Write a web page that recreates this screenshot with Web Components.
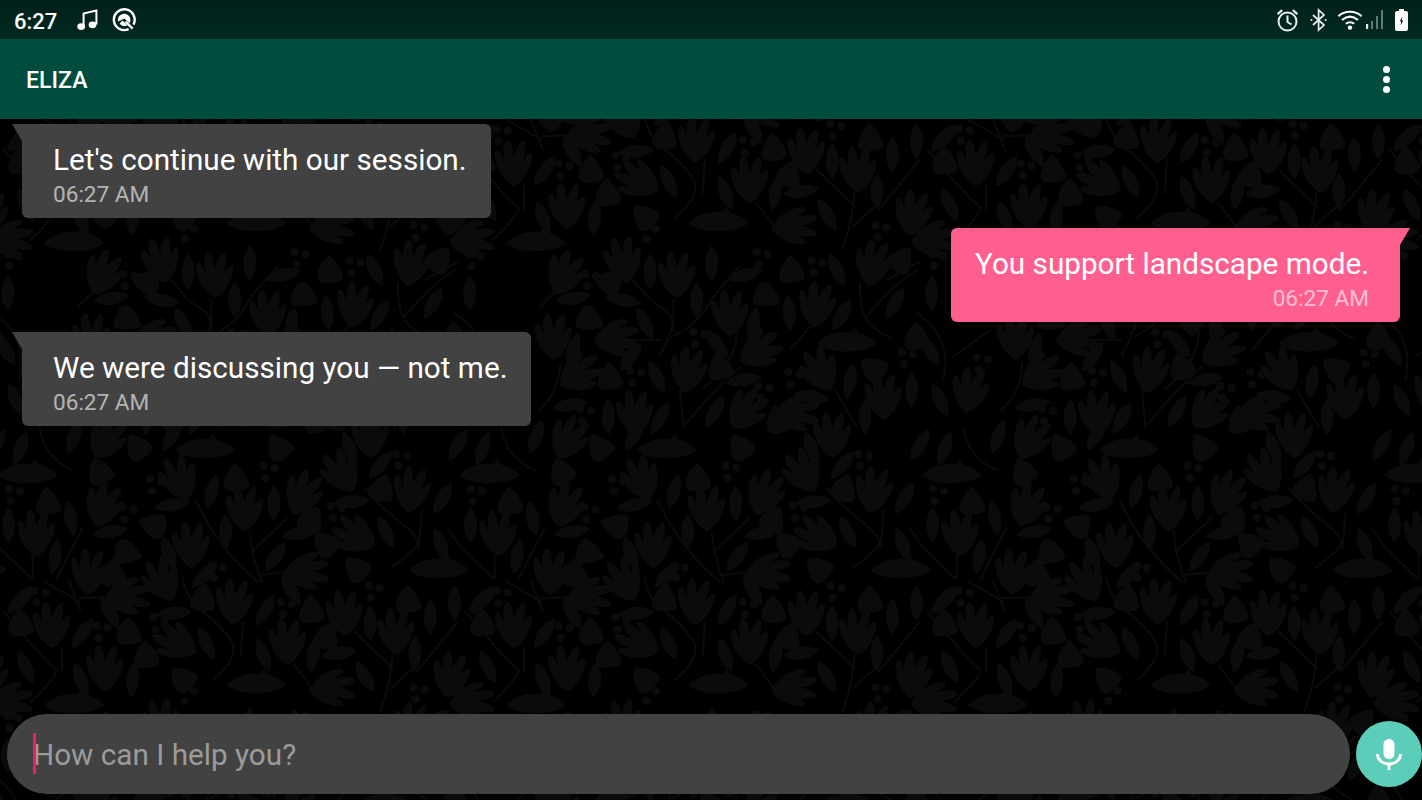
<!DOCTYPE html>
<html>
<head>
<meta charset="utf-8">
<title>ELIZA</title>
<style>
html,body{margin:0;height:100%;background:#000;overflow:hidden;}
body{font-family:Roboto,"Liberation Sans",sans-serif;}
</style>
</head>
<body>
<eliza-app>
    <status-bar slot="status"></status-bar>
    <app-bar slot="bar">ELIZA</app-bar>
    <chat-bubble time="06:27 AM">Let's continue with our session.</chat-bubble>
    <chat-bubble side="me" time="06:27 AM">You support landscape mode.</chat-bubble>
    <chat-bubble time="06:27 AM">We were discussing you — not me.</chat-bubble>
    <chat-composer slot="composer" placeholder="How can I help you?"></chat-composer>
</eliza-app>

<script>
// motifs are listed as read from two 3x crops of the wallpaper, hence the scale in each band
const bandA=[
    ["t",520,160,-20],["t",880,205,25],["t",710,250,0],["t",555,360,0],["t",990,140,-30],["t",1195,195,10],
    ["t",300,240,20],["t",105,325,0],["t",260,440,5],["t",470,465,-25],["t",680,530,5],["t",890,440,85],
    ["t",370,515,85],["t",1000,565,0],["t",1150,620,0],["t",150,600,0],["t",835,650,0],["t",305,730,0],
    ["t",1030,330,-60],["t",510,650,-60],["t",965,790,85],["t",30,830,85],["t",1310,750,10],
    ["t",310,40,30],["t",1075,30,0],
    ["l",60,70,20],["l",215,35,20],["l",1015,70,-20],["l",1330,60,30],["l",500,30,30],
    ["l",615,200,15],["l",795,235,0],["l",655,320,0],["l",490,385,-20],["l",800,395,35],["l",595,450,45],
    ["l",500,240,80],["l",870,325,80],["l",205,280,-10],["l",25,300,0],["l",160,395,10],["l",320,320,80],
    ["l",60,525,50],["l",320,565,-30],["l",240,625,35],["l",770,555,30],["l",505,565,85],["l",845,495,-30],
    ["l",1020,230,85],["l",1120,320,-25],["l",1105,120,40],["l",1285,220,30],["l",1280,360,-20],["l",1075,595,0],
    ["l",1250,575,0],["l",1205,685,0],["l",1060,755,-30],["l",985,685,80],["l",910,690,10],["l",600,655,-25],
    ["l",765,690,-20],["l",385,765,5],["l",235,765,-20],["l",75,725,-25],["l",1320,535,0],["l",1400,525,40],
    ["b",595,75,0],["b",80,150,0],["b",745,780,0],["b",215,840,0],["b",1275,435,0],
    ["c",685,160,0],["c",140,230,0],["c",445,300,-70],["c",370,385,110],["c",905,285,30],["c",945,355,-40],
    ["c",290,140,-20],["c",810,65,-30],["c",400,65,-30],["c",1110,190,20],["c",330,445,0],["c",375,620,0],
    ["c",590,520,10],["c",60,595,0],["c",905,555,0],["c",1185,525,0],["c",425,690,0],["c",950,635,20],
    ["c",530,760,-40],["c",1035,430,-40],
    ["d",450,180,0],["d",780,140,0],["d",40,210,0],["d",370,265,0],["d",630,440,0],["d",115,515,0],
    ["d",975,260,0],["d",1165,105,0],["d",1085,500,0],["d",830,550,0],["d",295,620,0],["d",460,595,0],
    ["d",545,810,0],["d",1215,805,0]
];
const stemsA=[
    [[570,230],[640,380],[750,470]],[[725,320],[730,390],[760,470]],[[835,280],[730,380]],
    [[1060,190],[1100,240],[1210,330],[1215,370],[1135,430]],[[1225,260],[1215,370]],
    [[530,460],[540,520],[640,600],[700,690],[620,765]],[[705,590],[700,690]],[[240,310],[165,460]],
    [[0,370],[90,460]],[[95,390],[95,460]],[[10,560],[140,720],[180,740],[90,830]],[[180,670],[180,740]],
    [[1300,310],[1340,370]],[[1330,590],[1210,740]],[[1140,690],[1135,770],[1105,860]],[[1030,620],[1140,730]],
    [[1210,720],[1135,790]],[[115,10],[130,100],[210,135]],[[130,470],[230,530]],[[200,470],[235,560]],
    [[230,520],[330,515]],[[855,720],[910,795]],[[750,450],[850,440]]
];
const bandB=[
    ["t",75,70,25],["t",410,75,0],["t",250,30,-10],["t",570,190,0],["t",830,165,10],["t",1000,40,10],
    ["t",445,360,10],["t",660,300,60],["t",120,370,60],["t",40,260,0],["t",840,360,-25],["t",1030,440,0],
    ["t",1290,420,10],["t",230,265,85],["t",620,480,40],["t",285,490,0],["t",770,490,85],
    ["l",330,65,0],["l",100,145,80],["l",250,150,100],["l",470,150,0],["l",315,220,-25],["l",640,225,10],
    ["l",100,300,15],["l",272,320,35],["l",530,280,-40],["l",350,380,-25],["l",748,190,-5],["l",905,195,30],
    ["l",615,75,75],["l",515,40,0],["l",890,60,-25],["l",1065,160,30],["l",610,390,80],["l",930,395,10],
    ["l",815,440,100],["l",1115,420,0],["l",1200,450,-25],["l",90,465,80],["l",525,485,30],["l",975,500,0],
    ["l",205,500,0],["l",1175,130,0],["l",1170,300,-30],["l",360,505,30],
    ["c",205,95,-70],["c",150,210,120],["c",680,140,120],["c",755,60,0],["c",540,350,-10],["c",210,380,0],
    ["c",1000,355,-50],["c",1130,260,0],["c",715,510,-10],["c",1085,30,40],
    ["d",150,90,0],["d",285,380,0],["d",475,265,0],["d",665,25,0],["d",830,50,0],["d",760,385,0],
    ["d",1100,325,0],["d",670,425,0],["d",135,495,0],["d",1190,30,0],["d",1325,340,0],
    ["b",920,280,0]
];
const stemsB=[
    [[280,90],[330,155],[395,190],[400,240],[360,315]],[[400,150],[400,240]],[[395,260],[470,225],[530,120],[600,50]],
    [[590,240],[595,330],[490,415]],[[200,270],[360,270]],[[960,100],[960,180],[1000,240],[1055,265]],
    [[1040,90],[1140,35]],[[980,200],[1050,110],[1130,60]],[[810,230],[750,300]],[[885,420],[950,530]],
    [[420,420],[430,530]],[[440,520],[510,430],[600,350]],[[0,170],[50,120]],[[60,340],[60,420],[0,480]],
    [[1130,190],[1240,260],[1210,390]],[[1240,320],[1350,240]]
];

const mapA=(x,y)=>[x/2.904,y/3+425];
const mapB=(x,y)=>[x/3+78,y/3+250];

function stemPath(points,map){
    const p=points.map(([x,y])=>map(x,y).map(n=>+n.toFixed(1)));
    let d=`M${p[0]}`;
    for(let i=1;i<p.length-1;i++){
        const mid=[(p[i][0]+p[i+1][0])/2,(p[i][1]+p[i+1][1])/2];
        d+=`Q${p[i]} ${i==p.length-2?p[i+1]:mid}`;
    }
    if(p.length==2) d+=`L${p[1]}`;
    return `<path d="${d}"/>`;
}
function motifUse(m,map){
    const [x,y]=map(m[1],m[2]);
    return `<use href="#${m[0]}" transform="translate(${x.toFixed(1)} ${y.toFixed(1)}) rotate(${m[3]})"/>`;
}

class ChatWallpaper extends HTMLElement{
    constructor(){
        super();
        this.attachShadow({mode:"open"});
        const art=bandA.map(m=>motifUse(m,mapA)).join("")+bandB.map(m=>motifUse(m,mapB)).join("");
        const stems=stemsA.map(s=>stemPath(s,mapA)).join("")+stemsB.map(s=>stemPath(s,mapB)).join("");
        let copies="";
        for(const dx of [-462,0,462]){
            for(const dy of [-462,0,462]){
                copies+=`<use href="#art" x="${dx}" y="${dy}"/>`;
            }
        }
        this.shadowRoot.innerHTML=`
            <style>
            :host{position:absolute;inset:0;display:block;background:#000;}
            svg{display:block;width:100%;height:100%;}
            </style>
            <svg aria-hidden="true">
                <defs>
                    <path id="t" d="M0 23C-10 17-18 6-19-8C-19-13-15-14-13-10L-9-1C-11-10-11-20-7-23C-3-24-1-16 0-6C2-14 6-22 10-22C13-21 12-12 9-2C12-7 16-11 18-9C20-6 16 8 10 15C6 20 3 22 0 23Z"/>
                    <path id="l" d="M0-18C8-9 9 7 0 18C-9 7-8-9 0-18Z"/>
                    <path id="b" d="M-30 0C-20-10-6-12 4-11L8-16L12-10C20-9 26-4 30 0C20 10-18 12-30 0Z"/>
                    <path id="c" d="M-1-15C6-10 12 0 13 6C14 11 6 12-1 13C-9 14-14 10-12 3C-10-5-6-11-1-15Z"/>
                    <g id="d"><circle cx="-5" cy="-6" r="4"/><circle cx="6" cy="-4" r="4"/><circle cx="-3" cy="6" r="4"/></g>
                    <g id="art" fill="#0b0b0b">
                        ${art}
                        <g fill="none" stroke="#0b0b0b" stroke-width="2" stroke-linecap="round">${stems}</g>
                    </g>
                    <pattern id="floral" width="462" height="462" patternUnits="userSpaceOnUse" patternTransform="translate(0 -119)">${copies}</pattern>
                </defs>
                <rect width="100%" height="100%" fill="url(#floral)"/>
            </svg>
        `;
    }
}
customElements.define("chat-wallpaper",ChatWallpaper);

class StatusBar extends HTMLElement{
    constructor(){
        super();
        this.attachShadow({mode:"open"});
        this.shadowRoot.innerHTML=`
            <style>
            :host{display:flex;align-items:center;height:39px;background:linear-gradient(#00201a,#01291f);color:#fff;padding:0 13px 0 14px;box-sizing:border-box;}
            .clock{font-size:22px;font-weight:500;width:62px;padding-top:3px;}
            .left{display:flex;align-items:center;gap:14px;flex:1;}
            .right{display:flex;align-items:center;}
            svg{display:block;}
            </style>
            <span class="clock">6:27</span>
            <div class="left">
                <svg width="22" height="22" viewBox="0 0 22 22" fill="#fff"><ellipse cx="5.2" cy="17.6" rx="3.9" ry="3.4"/><ellipse cx="16.5" cy="15.8" rx="3.9" ry="3.4"/><path d="M7.6 17.5V4.6L20.4 1.6V15.6" fill="none" stroke="#fff" stroke-width="2"/></svg>
                <svg width="24" height="24" viewBox="0 0 24 24"><path d="M16.6 21.1A10.4 10.4 0 1 1 21.4 16.6" fill="none" stroke="#fff" stroke-width="2.4"/><path d="M6 13.5A6.3 6.3 0 1 1 17.6 15.2L12.4 10.4Z" fill="#fff"/><path d="M7.6 15.6L10.7 12.4L15.4 17.4A6.3 6.3 0 0 1 7.6 15.6Z" fill="#fff"/><path d="M20.6 20.6L13.6 13.6" stroke="#fff" stroke-width="2.4"/></svg>
            </div>
            <div class="right">
                <svg width="23" height="24" viewBox="0 0 23 24" fill="none" stroke="#e8eeec" stroke-width="2" style="margin-right:11px"><circle cx="11.5" cy="13.5" r="9"/><path d="M11.5 7.500V14L15.500 16.500"/><path d="M1.600 6.200L6.200 2.200M21.400 6.200L16.800 2.200" stroke-width="2.200"/></svg>
                <svg width="17" height="24" viewBox="0 0 17 24" fill="none" stroke="#e8eeec" stroke-width="1.700" style="margin-right:10px"><path d="M3 7L14 17L8.600 22V2L14 7L3 17"/><circle cx="1.500" cy="12" r="1" fill="#e8eeec" stroke="none"/><circle cx="15.600" cy="12" r="1" fill="#e8eeec" stroke="none"/></svg>
                <svg width="26" height="22" viewBox="0 0 26 22" fill="none" stroke="#fff" stroke-width="2" style="margin-right:3px"><path d="M1.400 7.200C8 1.400 18 1.400 24.600 7.200"/><path d="M5 11C10 6.800 16 6.800 21 11"/><path d="M8.800 14.800C11.400 12.800 14.600 12.800 17.200 14.800"/><circle cx="13" cy="18.600" r="2.200" fill="#fff" stroke="none"/></svg>
                <svg width="18" height="22" viewBox="0 0 18 22" fill="#5f7a74" style="margin-right:10px"><rect x="0" y="15" width="2.200" height="5" fill="#dfe7e4"/><rect x="5" y="12" width="2" height="8"/><rect x="10" y="7" width="2" height="13"/><rect x="15" y="1" width="2" height="19"/></svg>
                <svg width="15" height="24" viewBox="0 0 15 24"><path d="M5 1H10V3H12A2 2 0 0 1 14 5V21A2 2 0 0 1 12 23H3A2 2 0 0 1 1 21V5A2 2 0 0 1 3 3H5Z" fill="#fff"/><path d="M8.400 8.500L5.700 13.600H7.200L6.600 17.500L9.300 12.400H7.800Z" fill="#01291f"/></svg>
            </div>
        `;
    }
}
customElements.define("status-bar",StatusBar);

class AppBar extends HTMLElement{
    constructor(){
        super();
        this.attachShadow({mode:"open"});
        this.shadowRoot.innerHTML=`
            <style>
            :host{display:flex;align-items:center;justify-content:space-between;height:80px;background:#004d40;color:#fff;padding:0 32px 0 26px;box-sizing:border-box;font-size:23.100px;font-weight:500;}
            .title{padding-top:2px;}
            .dots{display:flex;flex-direction:column;gap:3px;}
            .dots i{display:block;width:7px;height:7px;border-radius:50%;background:#fff;}
            </style>
            <div class="title"><slot></slot></div>
            <div class="dots"><i></i><i></i><i></i></div>
        `;
    }
}
customElements.define("app-bar",AppBar);

class ChatBubble extends HTMLElement{
    constructor(){
        super();
        this.attachShadow({mode:"open"});
        const time=this.getAttribute("time") || "";
        this.shadowRoot.innerHTML=`
            <style>
            :host{position:relative;display:block;align-self:flex-start;margin-left:22px;background:#424242;color:#fff;border-radius:0 6px 6px 6px;padding:17px 24px 6px 31px;height:94px;box-sizing:border-box;}
            :host::before{content:"";position:absolute;top:0;left:-10px;width:10px;height:17px;background:inherit;clip-path:polygon(0 0,100% 0,100% 100%);}
            :host([side="me"]){align-self:flex-end;margin:0 22px 0 0;background:#ff5f8e;border-radius:6px 0 6px 6px;padding:17px 31px 6px 24px;}
            :host([side="me"])::before{left:auto;right:-10px;clip-path:polygon(0 0,100% 0,0 100%);}
            .text{font-size:29.700px;line-height:38px;white-space:nowrap;}
            .time{font-size:22.600px;line-height:32px;color:rgba(255,255,255,.62);}
            :host([side="me"]) .time{text-align:right;}
            </style>
            <div class="text"><slot></slot></div>
            <div class="time">${time}</div>
        `;
    }
}
customElements.define("chat-bubble",ChatBubble);

class ChatComposer extends HTMLElement{
    constructor(){
        super();
        this.attachShadow({mode:"open"});
        const placeholder=this.getAttribute("placeholder") || "";
        this.shadowRoot.innerHTML=`
            <style>
            :host{display:flex;align-items:center;gap:6px;padding:0 0 6px 7px;}
            .field{position:relative;flex:1;height:80px;border-radius:40px;background:#424242;color:#9b9b9b;font-size:29.700px;display:flex;align-items:center;padding:1px 0 0 26px;box-sizing:border-box;}
            .caret{position:absolute;left:26px;top:19px;width:3px;height:41px;background:#ec1e68;}
            .mic{display:flex;align-items:center;justify-content:center;width:66px;height:66px;border-radius:50%;background:#5ccdb9;}
            svg{display:block;}
            </style>
            <div class="field"><span class="caret"></span>${placeholder}</div>
            <div class="mic">
                <svg width="26" height="31" viewBox="0 0 26 31" fill="none"><rect x="7.500" y="0" width="11" height="20" rx="5.500" fill="#fff"/><path d="M1.400 15C1.400 21 6.800 25 13 25C19.200 25 24.600 21 24.600 15" stroke="#fff" stroke-width="2.800"/><path d="M13 25V31" stroke="#fff" stroke-width="2.800"/></svg>
            </div>
        `;
    }
}
customElements.define("chat-composer",ChatComposer);

class ElizaApp extends HTMLElement{
    constructor(){
        super();
        this.attachShadow({mode:"open"});
        this.shadowRoot.innerHTML=`
            <style>
            :host{display:flex;flex-direction:column;height:100vh;}
            .screen{position:relative;flex:1;display:flex;flex-direction:column;min-height:0;}
            .messages{position:relative;flex:1;display:flex;flex-direction:column;gap:10px;padding-top:5px;}
            .bottom{position:relative;}
            </style>
            <slot name="status"></slot>
            <slot name="bar"></slot>
            <div class="screen">
                <chat-wallpaper></chat-wallpaper>
                <div class="messages"><slot></slot></div>
                <div class="bottom"><slot name="composer"></slot></div>
            </div>
        `;
    }
}
customElements.define("eliza-app",ElizaApp);
</script>
</body>
</html>
